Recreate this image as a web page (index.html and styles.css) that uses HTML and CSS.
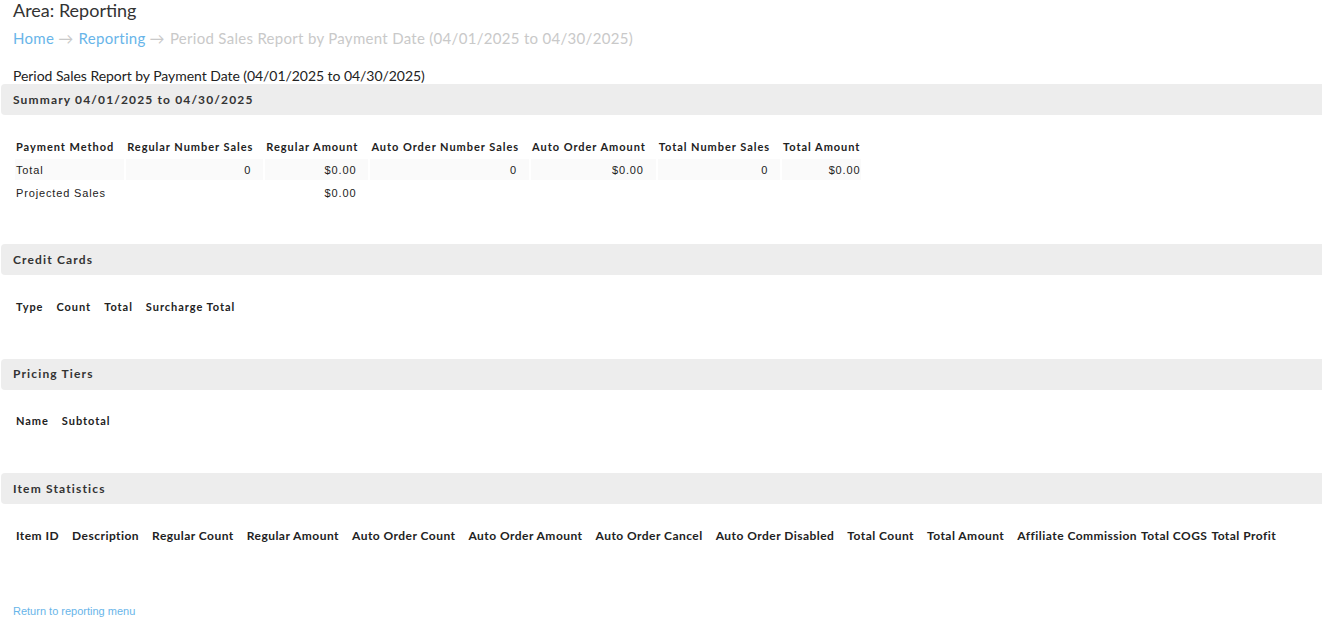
FILE: index.html
```html
<!DOCTYPE html>
<html lang="en">
<head>
<meta charset="utf-8">
<title>Period Sales Report by Payment Date</title>
<link rel="stylesheet" href="styles.css">
</head>
<body>
<div class="page">
  <h1 class="area-title">Area: Reporting</h1>
  <nav class="breadcrumb">
    <a href="#" class="crumb-link">Home</a><span class="arrow">→</span><a href="#" class="crumb-link">Reporting</a><span class="arrow">→</span><span class="crumb-current">Period Sales Report by Payment Date (04/01/2025 to 04/30/2025)</span>
  </nav>
  <div class="report-title">Period Sales Report by Payment Date (04/01/2025 to 04/30/2025)</div>

  <section class="section">
    <div class="bar"><h2 class="bar-title">Summary 04/01/2025 to 04/30/2025</h2></div>
    <table class="report">
      <tr>
        <th>Payment Method</th>
        <th>Regular Number Sales</th>
        <th>Regular Amount</th>
        <th>Auto Order Number Sales</th>
        <th>Auto Order Amount</th>
        <th>Total Number Sales</th>
        <th class="tight">Total Amount</th>
      </tr>
      <tr class="shaded">
        <td>Total</td>
        <td class="num">0</td>
        <td class="num">$0.00</td>
        <td class="num">0</td>
        <td class="num">$0.00</td>
        <td class="num">0</td>
        <td class="num tight">$0.00</td>
      </tr>
      <tr>
        <td>Projected Sales</td>
        <td></td>
        <td class="num">$0.00</td>
        <td></td>
        <td></td>
        <td></td>
        <td></td>
      </tr>
    </table>
  </section>

  <section class="section">
    <div class="bar"><h2 class="bar-title">Credit Cards</h2></div>
    <table class="report">
      <tr>
        <th>Type</th>
        <th>Count</th>
        <th>Total</th>
        <th>Surcharge Total</th>
      </tr>
    </table>
  </section>

  <section class="section">
    <div class="bar"><h2 class="bar-title">Pricing Tiers</h2></div>
    <table class="report">
      <tr>
        <th>Name</th>
        <th>Subtotal</th>
      </tr>
    </table>
  </section>

  <section class="section">
    <div class="bar"><h2 class="bar-title">Item Statistics</h2></div>
    <table class="report items">
      <tr>
        <th>Item ID</th>
        <th>Description</th>
        <th>Regular Count</th>
        <th>Regular Amount</th>
        <th>Auto Order Count</th>
        <th>Auto Order Amount</th>
        <th>Auto Order Cancel</th>
        <th>Auto Order Disabled</th>
        <th>Total Count</th>
        <th>Total Amount</th>
        <th class="tight">Affiliate Commission</th>
        <th class="tight">Total COGS</th>
        <th class="tight">Total Profit</th>
      </tr>
    </table>
  </section>

  <p class="return"><a href="#" class="return-link">Return to reporting menu</a></p>
</div>
</body>
</html>
```

FILE: styles.css
```css
html, body {
  margin: 0;
  padding: 0;
  background: #ffffff;
}

body {
  font-family: Lato, "Liberation Sans", sans-serif;
  color: #333333;
  overflow: hidden;
}

.page {
  padding: 0;
}

.area-title {
  margin: 0;
  padding-left: 13px;
  font-size: 18px;
  line-height: 20px;
  font-weight: 400;
  color: #333333;
}

.breadcrumb {
  margin-top: 8px;
  padding-left: 13px;
  font-size: 15px;
  line-height: 20px;
  letter-spacing: 0.3px;
  white-space: nowrap;
}

.crumb-link {
  color: #68b5e9;
  text-decoration: none;
}

.arrow {
  color: #c9c9c9;
  padding: 0 5px 0 4px;
}

.crumb-current {
  color: #c9c9c9;
}

.report-title {
  margin-top: 19px;
  padding-left: 13px;
  font-size: 14px;
  line-height: 17px;
  letter-spacing: -0.05px;
  color: #222222;
}

.section {
  margin: 0;
}

.bar {
  margin-left: 1px;
  height: 31px;
  display: flex;
  align-items: center;
  padding-left: 12px;
  background: #ededed;
  border-radius: 4px 0 0 4px;
}

.bar-title {
  margin: 0 0 1px 0;
  font-size: 12px;
  font-weight: 700;
  letter-spacing: 1.15px;
  color: #333333;
}

.report {
  margin: 19px 0 39.4px 13px;
  border-collapse: separate;
  border-spacing: 2px;
}

.report th,
.report td {
  height: 21px;
  padding: 0 10px 0 1px;
  box-sizing: border-box;
  white-space: nowrap;
  vertical-align: middle;
  font-size: 11px;
  line-height: 14px;
  color: #222222;
}

.report th {
  text-align: left;
  font-weight: 700;
  letter-spacing: 0.96px;
}

.report td {
  font-family: "Liberation Sans", Arial, sans-serif;
  letter-spacing: 0.85px;
}

.report td.num {
  text-align: right;
  padding-right: 12px;
}

.report .tight,
.report td.num.tight {
  padding-right: 1px;
}

.shaded td {
  background: #fafafa;
}

.items th {
  font-size: 12px;
  letter-spacing: 0.46px;
}

.return {
  margin: 57px 0 0 0;
  padding-left: 13px;
  font-family: "Liberation Sans", Arial, sans-serif;
  font-size: 11px;
  line-height: 13px;
}

.return-link {
  color: #68b5e9;
  text-decoration: none;
}
```
